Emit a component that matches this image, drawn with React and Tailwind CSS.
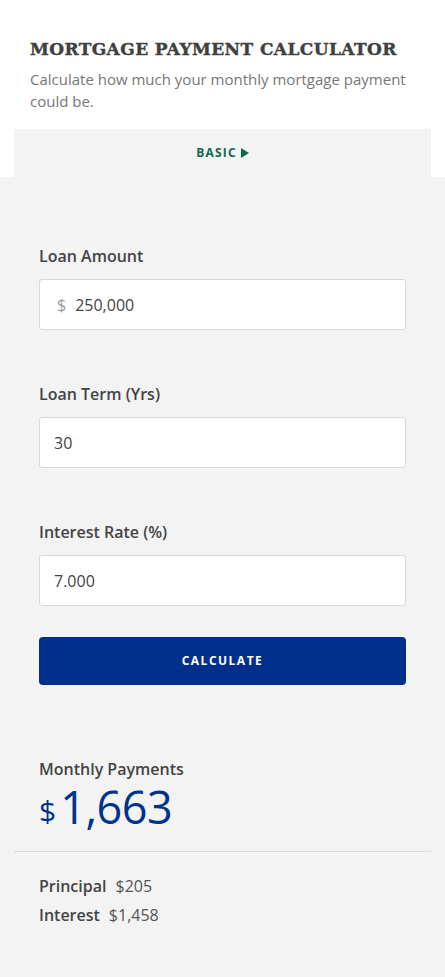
export default function App() {
  return (
    <div className="min-h-[977px] bg-[#f3f3f4] font-['Open_Sans',sans-serif] text-[#444]">
      {/* header */}
      <div className="bg-white">
        <div className="px-[30px] pt-[37px] pb-[17px]">
          <h1 className="whitespace-nowrap font-['DejaVu_Serif',serif] text-[17px] font-bold tracking-[0.4px] text-[#404040] leading-[24px] [-webkit-text-stroke:0.4px_#404040]">
            MORTGAGE PAYMENT CALCULATOR
          </h1>
          <p className="mt-[7px] text-[15px] leading-[22px] text-[#777]">
            Calculate how much your monthly mortgage payment could be.
          </p>
        </div>
        <div className="mx-[14px] flex h-[48px] items-center justify-center bg-[#f3f3f4]">
          <span className="flex items-center gap-[4px] text-[12px] font-bold tracking-[1.2px] text-[#0f6a4e]">
            BASIC
            <svg width="8" height="10" viewBox="0 0 8 10">
              <path d="M0 0 L8 5 L0 10 Z" fill="#0f6a4e" />
            </svg>
          </span>
        </div>
      </div>

      {/* form */}
      <div className="mx-[14px]">
        <div className="px-[25px] pt-[67px]">
          <div className="flex flex-col">
            <label className="text-[16px] font-semibold leading-[24px] text-[#444]">Loan Amount</label>
            <div className="mt-[11px] flex h-[51px] items-center rounded-[3px] border border-[#d9d9d9] bg-white px-[17px] text-[16px]">
              <span className="text-[#999]">$</span>
              <span className="ml-[9px] text-[#444]">250,000</span>
            </div>
          </div>

          <div className="mt-[52px] flex flex-col">
            <label className="text-[16px] font-semibold leading-[24px] text-[#444]">Loan Term (Yrs)</label>
            <div className="mt-[11px] flex h-[51px] items-center rounded-[3px] border border-[#d9d9d9] bg-white px-[14px] text-[16px] text-[#444]">
              30
            </div>
          </div>

          <div className="mt-[52px] flex flex-col">
            <label className="text-[16px] font-semibold leading-[24px] text-[#444]">Interest Rate (%)</label>
            <div className="mt-[11px] flex h-[51px] items-center rounded-[3px] border border-[#d9d9d9] bg-white px-[14px] text-[16px] text-[#444]">
              7.000
            </div>
          </div>

          <button className="mt-[31px] flex h-[48px] w-full items-center justify-center rounded-[4px] bg-[#00308c] text-[12px] font-bold tracking-[1.5px] text-white">
            CALCULATE
          </button>

          <div className="pt-[72px]">
            <div className="text-[16px] font-semibold leading-[24px] text-[#444]">Monthly Payments</div>
            <div className="mt-[4px] flex h-[44px] items-end text-[#00338d]">
              <span className="text-[30px] font-medium leading-[36px]">$</span>
              <span className="ml-[4px] text-[45px] font-medium leading-[44px] tracking-[-0.5px]">1,663</span>
            </div>
          </div>
        </div>

        <div className="mt-[22px] border-t border-[#dcdcdc]" />

        <div className="px-[25px] pt-[20px] text-[16px] leading-[29px]">
          <div>
            <span className="font-semibold text-[#444]">Principal</span>
            <span className="ml-[9px] text-[#555]">$205</span>
          </div>
          <div>
            <span className="font-semibold text-[#444]">Interest</span>
            <span className="ml-[9px] text-[#555]">$1,458</span>
          </div>
        </div>
      </div>
    </div>
  );
}
